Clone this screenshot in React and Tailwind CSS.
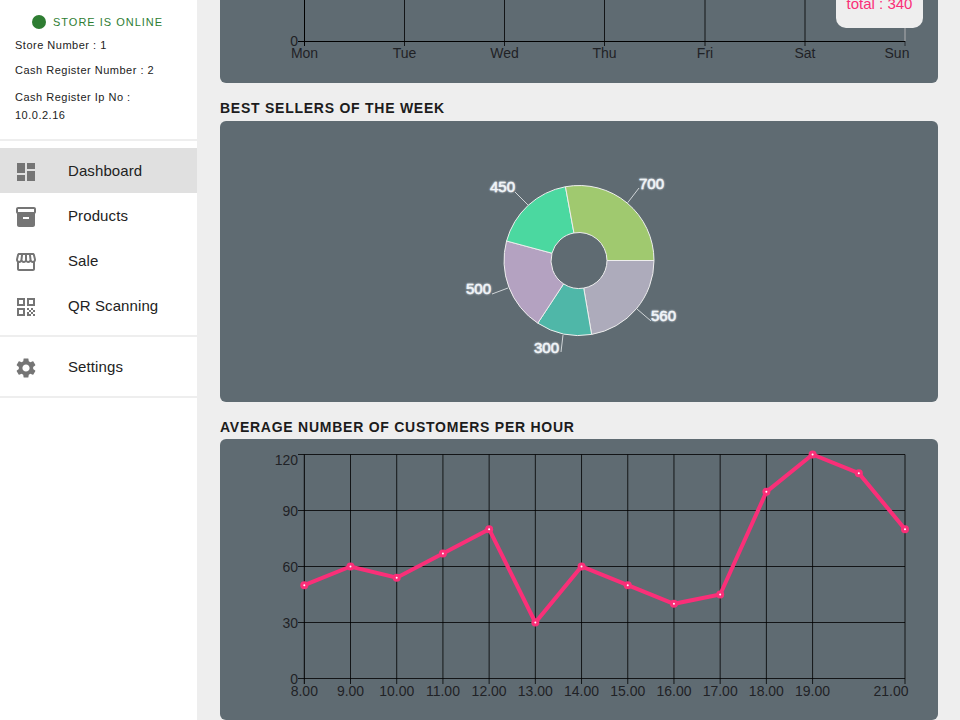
import React from "react";

const navTop = [
  { label: "Dashboard", active: true, d: "M3 13h8V3H3v10zm0 8h8v-6H3v6zm10 0h8V11h-8v10zm0-18v6h8V3h-8z" },
  { label: "Products", d: "M20 2H4c-1 0-2 .9-2 2v3.01c0 .72.43 1.34 1 1.69V20c0 1.1 1.1 2 2 2h14c.9 0 2-.9 2-2V8.7c.57-.35 1-.97 1-1.69V4c0-1.1-1-2-2-2zm-5 12H9v-2h6v2zm5-7H4V4l16-.02V7z" },
  { label: "Sale", d: "M21.9 8.89l-1.05-4.37c-.22-.9-1-1.52-1.91-1.52H5.05c-.9 0-1.69.63-1.9 1.52L2.1 8.89c-.24 1.02-.02 2.06.62 2.88.08.11.19.19.28.29V19c0 1.1.9 2 2 2h14c1.1 0 2-.9 2-2v-6.94c.09-.09.2-.18.28-.28.64-.82.87-1.87.62-2.89zm-2.99-3.9l1.05 4.37c.1.42.01.84-.25 1.17-.14.18-.44.47-.94.47-.61 0-1.14-.49-1.21-1.14L16.98 5l1.93-.01zM13 5h1.96l.54 4.52c.05.39-.07.78-.33 1.07-.22.26-.54.41-.95.41-.67 0-1.22-.59-1.22-1.31V5zM8.49 9.52L9.04 5H11v4.69c0 .72-.55 1.31-1.29 1.31-.34 0-.65-.15-.89-.41-.25-.29-.37-.68-.33-1.07zm-4.45-.16L5.05 5h1.97l-.58 4.86c-.08.65-.6 1.14-1.21 1.14-.49 0-.8-.29-.93-.47-.27-.32-.36-.75-.26-1.17zM5 19v-6.03c.08.01.15.03.23.03.87 0 1.66-.36 2.24-.95.6.6 1.4.95 2.31.95.87 0 1.65-.36 2.23-.93.59.57 1.39.93 2.29.93.84 0 1.64-.35 2.24-.95.58.59 1.37.95 2.24.95.08 0 .15-.02.23-.03V19H5z" },
  { label: "QR Scanning", d: "M3 11h8V3H3v8zm2-6h4v4H5V5zM3 21h8v-8H3v8zm2-6h4v4H5v-4zM13 3v8h8V3h-8zm6 6h-4V5h4v4zM21 19h-2v2h2v-2zM15 13h-2v2h2v-2zM17 15h-2v2h2v-2zM15 17h-2v2h2v-2zM17 19h-2v2h2v-2zM19 17h-2v2h2v-2zM19 13h-2v2h2v-2zM21 15h-2v2h2v-2zM15 19h-2v2h2v-2z" },
];
const gear = "M19.14 12.94c.04-.3.06-.61.06-.94 0-.32-.02-.64-.07-.94l2.03-1.58c.18-.14.23-.41.12-.61l-1.92-3.32c-.12-.22-.37-.29-.59-.22l-2.39.96c-.5-.38-1.03-.7-1.62-.94l-.36-2.54c-.04-.24-.24-.41-.48-.41h-3.84c-.24 0-.43.17-.47.41l-.36 2.54c-.59.24-1.13.57-1.62.94l-2.39-.96c-.22-.08-.47 0-.59.22L2.74 8.87c-.12.21-.08.47.12.61l2.03 1.58c-.05.3-.09.63-.09.94s.02.64.07.94l-2.03 1.58c-.18.14-.23.41-.12.61l1.92 3.32c.12.22.37.29.59.22l2.39-.96c.5.38 1.03.7 1.62.94l.36 2.54c.05.24.24.41.48.41h3.84c.24 0 .44-.17.47-.41l.36-2.54c.59-.24 1.13-.56 1.62-.94l2.39.96c.22.08.47 0 .59-.22l1.92-3.32c.12-.22.07-.47-.12-.61l-2.01-1.58zM12 15.6c-1.98 0-3.6-1.62-3.6-3.6s1.62-3.6 3.6-3.6 3.6 1.62 3.6 3.6-1.62 3.6-3.6 3.6z";

function NavRow({ label, d, active }) {
  return (
    <div className={`flex h-[45px] items-center pl-[14px] pt-[2px] ${active ? "bg-[#e0e0e0]" : ""}`}>
      <svg viewBox="0 0 24 24" className="h-6 w-6 fill-[#757575]"><path d={d} /></svg>
      <span className="ml-[30px] text-[15px] tracking-[0.1px] text-[#222]">{label}</span>
    </div>
  );
}

function Sidebar() {
  return (
    <aside className="flex h-full w-[197px] shrink-0 flex-col bg-white">
      <div className="h-[141px] border-b-2 border-[#eeeeee] pl-[15px] text-[11px] tracking-[0.5px] text-[#222]">
        <div className="mt-[15px] flex h-[14px] items-center pl-[17px]">
          <span className="h-[14px] w-[14px] rounded-full bg-[#2e7d32]" />
          <span className="ml-[7px] text-[11px] tracking-[1px] text-[#2e7d32]">STORE IS ONLINE</span>
        </div>
        <p className="mt-[9px] h-[14px] leading-[14px]">Store Number : 1</p>
        <p className="mt-[11px] h-[14px] leading-[14px]">Cash Register Number : 2</p>
        <p className="mt-[11px] w-[160px] leading-[18px]">Cash Register Ip No : 10.0.2.16</p>
      </div>
      <nav className="border-b-2 border-[#eeeeee] py-[7px]">
        {navTop.map((n) => <NavRow key={n.label} {...n} />)}
      </nav>
      <div className="border-b-2 border-[#eeeeee] py-[7px]">
        <NavRow label="Settings" d={gear} />
      </div>
    </aside>
  );
}

const days = ["Mon", "Tue", "Wed", "Thu", "Fri", "Sat", "Sun"];
const dayX = [304.5, 404.5, 504.5, 604.5, 705, 805, 905];

function WeekChart() {
  return (
    <svg viewBox="220 0 718 83" className="block h-full w-full font-['Liberation_Sans',Arial,sans-serif] text-[14px]">
      {dayX.map((x, i) => (
        <g key={x}>
          <line x1={x} x2={x} y1="0" y2="46" className={i === 6 ? "stroke-[#2b2f33]" : "stroke-black/80"} />
          <text x={i === 6 ? 897 : x} y="58" textAnchor="middle" className="fill-[#1f2226]">{days[i]}</text>
        </g>
      ))}
      <line x1="298" x2="905" y1="41.5" y2="41.5" className="stroke-black" />
      <line x1="304.5" x2="304.5" y1="0" y2="46" className="stroke-black" />
      <text x="298" y="46" textAnchor="end" className="fill-[#1f2226]">0</text>
      <line x1="905" x2="905" y1="28" y2="41" className="stroke-[#c9cdd0]" />
    </svg>
  );
}

const slices = [
  { v: 560, c: "#adabbb" },
  { v: 300, c: "#4fb7a8" },
  { v: 500, c: "#b4a2c1" },
  { v: 450, c: "#4bd8a0" },
  { v: 700, c: "#a0c96f" },
];
const total = slices.reduce((s, x) => s + x.v, 0);
const cx = 579, cy = 260.5, R = 75, r = 28;
const pt = (rad, deg) => [cx + rad * Math.cos((deg * Math.PI) / 180), cy + rad * Math.sin((deg * Math.PI) / 180)];
function arc(a0, a1) {
  const [x0, y0] = pt(R, a0), [x1, y1] = pt(R, a1), [x2, y2] = pt(r, a1), [x3, y3] = pt(r, a0);
  const large = a1 - a0 > 180 ? 1 : 0;
  return `M${x0} ${y0}A${R} ${R} 0 ${large} 1 ${x1} ${y1}L${x2} ${y2}A${r} ${r} 0 ${large} 0 ${x3} ${y3}Z`;
}
const pieLabels = [
  { t: "700", x: 639, y: 189, l: [627.7, 202.7, 639, 188] },
  { t: "450", x: 490, y: 192, l: [528, 205, 515, 192] },
  { t: "500", x: 466, y: 294, l: [508, 288, 492, 294] },
  { t: "300", x: 534, y: 353, l: [563, 335, 561, 352] },
  { t: "560", x: 651, y: 321, l: [637, 309, 651, 321] },
];

function Pie() {
  let a = 0;
  const paths = slices.map((s) => {
    const a1 = a + (s.v / total) * 360;
    const p = <path key={s.v} d={arc(a, a1)} fill={s.c} className="stroke-[#eeeeee]" />;
    a = a1;
    return p;
  });
  return (
    <svg viewBox="220 121 718 281" className="block h-full w-full font-['Liberation_Sans',Arial,sans-serif]">
      {paths}
      {pieLabels.map((l) => (
        <g key={l.t}>
          <line x1={l.l[0]} y1={l.l[1]} x2={l.l[2]} y2={l.l[3]} className="stroke-[#d0d5d8]" />
          <text x={l.x} y={l.y} className="fill-[#f6f8fa] stroke-[#f6f8fa] stroke-[0.4px] text-[15px] [text-shadow:0_0_2px_#dfe8f0]">{l.t}</text>
        </g>
      ))}
    </svg>
  );
}

const hours = ["8.00", "9.00", "10.00", "11.00", "12.00", "13.00", "14.00", "15.00", "16.00", "17.00", "18.00", "19.00", "", "21.00"];
const vals = [50, 60, 54, 67, 80, 30, 60, 50, 40, 45, 100, 120, 110, 80];
const lx = (i) => 304.3 + (i * 600.7) / 13;
const ly = (v) => 678.5 - (v * 224) / 120;

function LineChart() {
  const pts = vals.map((v, i) => `${lx(i)},${ly(v)}`).join(" ");
  return (
    <svg viewBox="220 439 718 281" className="block h-full w-full font-['Liberation_Sans',Arial,sans-serif] text-[14px]">
      {[120, 90, 60, 30, 0].map((v) => (
        <g key={v}>
          <line x1="298" x2="905" y1={ly(v)} y2={ly(v)} className="stroke-black/80" />
          <text x="298" y={v === 120 ? 465 : ly(v) + 5.5} textAnchor="end" className="fill-[#1f2226]">{v}</text>
        </g>
      ))}
      {hours.map((h, i) => h && (
        <g key={i}>
          <line x1={lx(i)} x2={lx(i)} y1="454.5" y2="684" className={i === 0 ? "stroke-black" : "stroke-black/80"} />
          <text x={i === 13 ? 891 : lx(i)} y="696" textAnchor="middle" className="fill-[#1f2226]">{h}</text>
        </g>
      ))}
      <polyline points={pts} fill="none" className="stroke-[#fa2f78] stroke-[4px]" />
      {vals.map((v, i) => (
        <g key={i}>
          <circle cx={lx(i)} cy={ly(v)} r="4" className="fill-[#fa2f78]" />
          <circle cx={lx(i)} cy={ly(v)} r="1" className="fill-white" />
        </g>
      ))}
    </svg>
  );
}

function Title({ children, className }) {
  return <h2 className={`mt-[17px] h-4 text-[14px] font-bold leading-4 tracking-[0.75px] text-[#1c1c1c] ${className}`}>{children}</h2>;
}

export default function App() {
  return (
    <div className="flex h-screen w-full overflow-hidden bg-[#eeeeee] font-['Liberation_Sans',Arial,sans-serif]">
      <Sidebar />
      <main className="min-w-0 flex-1 pl-[23px] pr-[22px]">
        <section className="relative h-[83px] rounded-b-md bg-[#5f6b72]">
          <WeekChart />
          <div className="absolute right-[15px] top-0 flex h-[28px] w-[87px] items-start justify-center rounded-b-[10px] bg-[#eeeeee] text-[15px] leading-none text-[#fa2f78]">
            <span className="mt-[-4px]">total : 340</span>
          </div>
        </section>
        <Title className="mb-[5px]">BEST SELLERS OF THE WEEK</Title>
        <section className="h-[281px] rounded-md bg-[#5f6b72]"><Pie /></section>
        <Title className="mb-[4px]">AVERAGE NUMBER OF CUSTOMERS PER HOUR</Title>
        <section className="h-[281px] rounded-md bg-[#5f6b72]"><LineChart /></section>
      </main>
    </div>
  );
}
